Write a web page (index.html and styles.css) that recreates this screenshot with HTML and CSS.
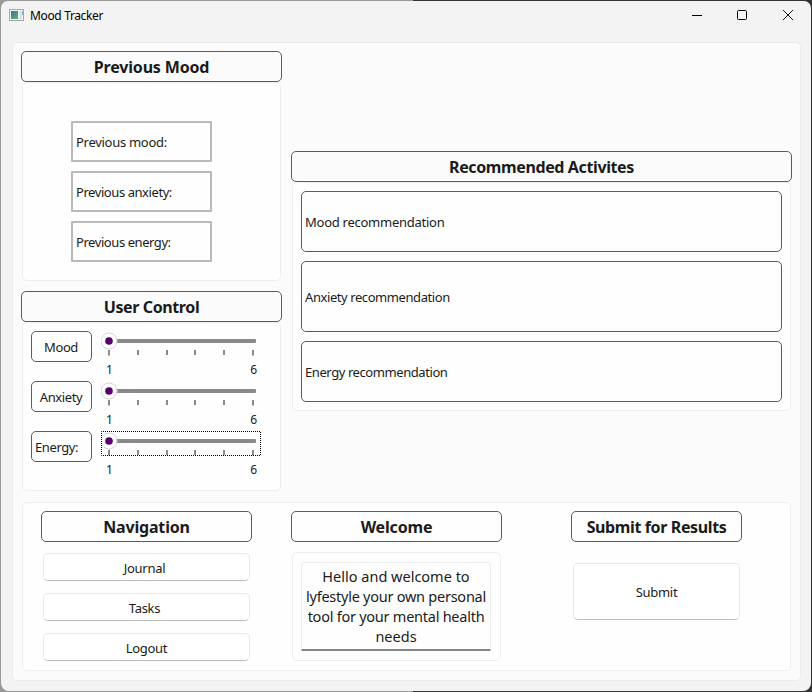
FILE: index.html
```html
<!DOCTYPE html>
<html lang="en">
<head>
<meta charset="utf-8">
<title>Mood Tracker</title>
<link rel="stylesheet" href="styles.css">
</head>
<body>
<div class="window">
  <header class="titlebar">
    <svg class="app-icon" width="15" height="12" viewBox="0 0 15 12">
      <defs><linearGradient id="pane" x1="0" y1="0" x2="0.6" y2="1"><stop offset="0" stop-color="#3d7399"/><stop offset="1" stop-color="#5aa77c"/></linearGradient></defs>
      <rect x="0.5" y="0.5" width="14" height="11" fill="#f4f4f4" stroke="#a3a7aa"/>
      <rect x="2" y="2" width="7" height="8" fill="url(#pane)"/>
      <rect x="10" y="2" width="3" height="8" fill="#dfe3e5"/>
      <rect x="13" y="2" width="1" height="4" fill="#7fb0b5"/>
    </svg>
    <span class="app-name">Mood Tracker</span>
    <svg class="controls" width="104" height="12" viewBox="0 0 104 12">
      <path d="M0 6.5h10" stroke="#000" fill="none"/>
      <rect x="45.5" y="1.5" width="9" height="9" rx="1" stroke="#000" fill="none"/>
      <path d="M91 1l10 10M101 1l-10 10" stroke="#111" fill="none"/>
    </svg>
  </header>
  <main class="main">
    <div class="top">
      <div class="left">
        <section>
          <h2 class="heading">Previous Mood</h2>
          <div class="panel previous">
            <div class="value">Previous mood:</div>
            <div class="value tight">Previous anxiety:</div>
            <div class="value tight">Previous energy:</div>
          </div>
        </section>
        <section>
          <h2 class="heading tight">User Control</h2>
          <div class="panel sliders">
            <div class="row"><div class="tag">Mood</div><div class="slider"><svg class="track" width="160" height="25" viewBox="0 0 160 25"><use href="#slider"/></svg><div class="scale"><span>1</span><span>6</span></div></div></div>
            <div class="row"><div class="tag">Anxiety</div><div class="slider"><svg class="track" width="160" height="25" viewBox="0 0 160 25"><use href="#slider"/></svg><div class="scale"><span>1</span><span>6</span></div></div></div>
            <div class="row"><div class="tag start">Energy:</div><div class="slider"><svg class="track" width="160" height="25" viewBox="0 0 160 25"><use href="#slider"/><rect x="0.5" y="0.5" width="159" height="24" fill="none" stroke="#000" stroke-dasharray="1 1" stroke-dashoffset="0.5"/></svg><div class="scale"><span>1</span><span>6</span></div></div></div>
          </div>
        </section>
      </div>
      <section class="right">
        <h2 class="heading tight">Recommended Activites</h2>
        <div class="panel recommendations">
          <div class="rec">Mood recommendation</div>
          <div class="rec tall tight">Anxiety recommendation</div>
          <div class="rec tight">Energy recommendation</div>
        </div>
      </section>
    </div>
    <div class="panel bottom">
      <section class="nav">
        <h2 class="heading">Navigation</h2>
        <div class="nav-list">
          <button class="shift">Journal</button>
          <button class="shift">Tasks</button>
          <button>Logout</button>
        </div>
      </section>
      <section class="welcome">
        <h2 class="heading">Welcome</h2>
        <div class="panel frame"><div class="message">Hello and welcome to<br><span class="narrow">lyfestyle your own personal</span><br><span class="narrow">tool for your mental health</span><br>needs</div></div>
      </section>
      <section class="submit">
        <h2 class="heading tight">Submit for Results</h2>
        <button>Submit</button>
      </section>
    </div>
  </main>
</div>
<svg class="defs" width="0" height="0">
  <symbol id="slider" viewBox="0 0 160 25">
    <rect x="8" y="8" width="147" height="4" rx="1" fill="#8a8a8a"/>
    <path d="M8 19v5.5M37 19v5M66 19v5M94 19v5M123 19v5M152 19v5.5" stroke="#8a8a8a" stroke-width="2"/>
    <circle cx="8" cy="10" r="8" fill="#fff" stroke="#d6d6d6"/>
    <circle cx="8" cy="10" r="3.8" fill="#550068"/>
  </symbol>
</svg>
</body>
</html>
```
FILE: styles.css
```css
* { box-sizing: border-box; }
body {
  margin: 0;
  height: 692px;
  overflow: hidden;
  background: linear-gradient(90deg, #999 0 413px, #333 413px);
  color: #1b1b1b;
  font: 13px/18px "Noto Sans", "Open Sans", sans-serif;
}
.defs { position: absolute; }
.window {
  width: 812px;
  height: 692px;
  padding: 1px;
  display: flex;
  flex-direction: column;
}
.titlebar {
  position: relative;
  z-index: 1;
  flex: none;
  height: 41px;
  padding: 8px 15px 0 8px;
  display: flex;
  align-items: flex-start;
  background: #f3f3f3;
  border-radius: 7px 7px 0 0;
}
.app-name { margin: -2px 0 0 6px; font-size: 12px; color: #000; letter-spacing: -0.35px; }
.controls { margin-left: auto; }
.main {
  flex: 1;
  margin: 0 10px 10px 11px;
  padding: 8px 8px 9px;
  background: #fbfbfb;
  border: 1px solid #ebebeb;
  border-radius: 5px;
  box-shadow: 0 0 0 20px #f3f3f3;
  clip-path: inset(0 -10px -10px -11px round 0 0 8px 8px);
}
.top { display: flex; gap: 9px; height: 451px; }
.left { width: 261px; display: flex; flex-direction: column; gap: 10px; }
.heading {
  margin: 0;
  height: 31px;
  border: 1px solid #5c5c5c;
  border-radius: 5px;
  display: flex;
  align-items: center;
  justify-content: center;
  white-space: nowrap;
  font-size: 16px;
  font-weight: 700;
  line-height: 20px;
  letter-spacing: -0.17px;
}
.heading.tight { letter-spacing: -0.38px; }
.panel { background: #fefefe; border: 1px solid #eee; border-radius: 5px; }
section > .panel { margin: 0 1px; }
.previous { height: 199px; padding: 38px 0 0 48px; display: flex; flex-direction: column; gap: 9px; }
.value {
  width: 141px;
  height: 41px;
  padding: 0 0 0 3px;
  border: 2px solid #b9b9b9;
  border-radius: 1px;
  display: flex;
  align-items: center;
  letter-spacing: -0.28px;
}
.value.tight { letter-spacing: -0.43px; }
.sliders { height: 169px; padding: 8px; display: flex; flex-direction: column; gap: 5px; }
.row { display: flex; gap: 9px; height: 45px; }
.tag {
  width: 61px;
  height: 31px;
  padding-right: 1px;
  border: 1px solid #5c5c5c;
  border-radius: 5px;
  display: flex;
  align-items: center;
  justify-content: center;
  letter-spacing: -0.4px;
}
.tag.start { justify-content: flex-start; padding-left: 3px; }
.slider { width: 160px; }
.track { display: block; overflow: visible; }
.scale { display: flex; justify-content: space-between; padding: 5px 4px 0 5px; font-size: 12px; line-height: 17px; }
.right { width: 501px; padding-top: 100px; }
.recommendations { height: 229px; padding: 8px; display: flex; flex-direction: column; gap: 9px; }
.rec {
  height: 61px;
  padding: 1px 0 0 3px;
  border: 1px solid #5c5c5c;
  border-radius: 5px;
  display: flex;
  align-items: center;
  letter-spacing: -0.26px;
}
.rec.tall { height: 71px; }
.rec.tight { letter-spacing: -0.42px; }
.bottom { margin: 0 1px; height: 169px; padding: 8px 0 0 18px; display: flex; }
.nav { width: 211px; }
.nav-list { display: flex; flex-direction: column; gap: 12px; padding: 11px 2px 0; }
button {
  height: 28px;
  padding: 1px 0 0;
  border: 1px solid #e8e8e8;
  border-bottom-color: #bcbcbc;
  border-radius: 5px;
  background: #fff;
  color: inherit;
  font: inherit;
  letter-spacing: -0.3px;
}
.shift { padding-right: 4px; }
.welcome { width: 211px; margin-left: 39px; }
.frame { height: 109px; padding: 9px 9px 0 8px; }
section > .frame { margin-top: 10px; }
.message {
  height: 89px;
  padding-top: 3px;
  border: 1px solid #eee;
  border-bottom: 2px solid #868686;
  border-radius: 4px 4px 1px 1px;
  text-align: center;
  white-space: nowrap;
  font-size: 14.5px;
  line-height: 20px;
}
.narrow { letter-spacing: -0.25px; }
.submit { width: 171px; margin-left: 69px; }
.submit button { display: block; width: 167px; height: 57px; margin: 21px 2px 0; }
```
